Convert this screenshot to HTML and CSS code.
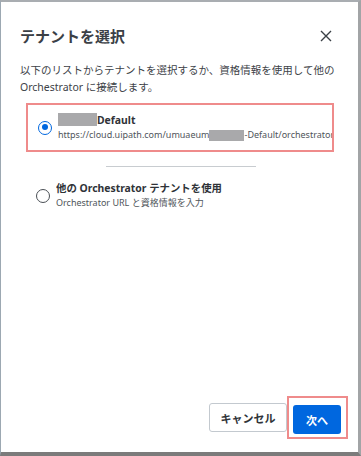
FILE: index.html
```html
<!DOCTYPE html>
<html lang="ja">
<head>
    <meta charset="UTF-8">
    <title>テナントを選択</title>
    <link rel="stylesheet" href="styles.css">
</head>
<body>
    <div class="dialog">
        <!-- Header -->
        <div class="dialog__header">
            <h1>テナントを選択</h1>
            <svg class="close" width="12" height="12" viewBox="0 0 12 12">
                <path d="M1 1 L11 11 M11 1 L1 11" stroke="#3a4046" stroke-width="1.4" fill="none"/>
            </svg>
        </div>

        <p class="intro">以下のリストからテナントを選択するか、資格情報を使用して他の Orchestrator に接続します。</p>

        <!-- Tenant options -->
        <div class="options">
            <div class="option option--marked">
                <span class="radio radio--on"></span>
                <div class="option__text">
                    <div class="option__title"><span class="redact redact--name"></span>Default</div>
                    <div class="option__sub">https://cloud.uipath.com/umuaeum<span class="redact redact--url"></span>-Default/orchestrator_</div>
                </div>
            </div>

            <div class="divider"></div>

            <div class="option">
                <span class="radio"></span>
                <div class="option__text">
                    <div class="option__title">他の Orchestrator テナントを使用</div>
                    <div class="option__sub">Orchestrator URL と資格情報を入力</div>
                </div>
            </div>
        </div>

        <!-- Footer -->
        <div class="dialog__footer">
            <button class="btn btn--cancel">キャンセル</button>
            <div class="mark">
                <button class="btn btn--primary">次へ</button>
            </div>
        </div>
    </div>
</body>
</html>
```

FILE: styles.css
```css
html, body {
    margin: 0;
    padding: 0;
    background-color: #ffffff;
}

body {
    font-family: "Noto Sans", "Noto Sans CJK JP", sans-serif;
    color: #3a3f44;
}

.dialog {
    box-sizing: border-box;
    width: 361px;
    height: 456px;
    display: flex;
    flex-direction: column;
    border-top: 2px solid #a9adb1;
    border-left: 1px solid #9ca8b2;
    border-right: 3px solid #a2a4a6;
    border-bottom: 4px solid #7b7b7b;
    background-color: #fff;
}

.dialog__header {
    display: flex;
    align-items: center;
    justify-content: space-between;
    padding: 24px 26px 0 19px;
}

h1 {
    margin: 0;
    font-size: 15px;
    line-height: 20px;
    font-weight: 700;
    color: #3b4046;
}

.close {
    display: block;
}

.intro {
    margin: 16px 20px 0 19px;
    font-size: 10.5px;
    line-height: 17px;
    color: #3d4247;
}

.options {
    margin: 7px 0 0 25px;
    width: 308px;
}

.option {
    display: flex;
    align-items: center;
    padding: 0 0 0 10px;
    height: 45px;
}

.option--marked {
    border: 2px solid #ef8b8b;
}

.radio {
    box-sizing: border-box;
    width: 14px;
    height: 14px;
    border-radius: 50%;
    border: 1.5px solid #4a4f55;
    flex-shrink: 0;
    margin-right: 6px;
    position: relative;
}

.radio--on {
    border-color: #0067df;
}

.radio--on::after {
    content: "";
    position: absolute;
    left: 2.5px;
    top: 2.5px;
    width: 6px;
    height: 6px;
    border-radius: 50%;
    background-color: #0067df;
}

.option__text {
    overflow: hidden;
    white-space: nowrap;
}

.option__title {
    font-size: 10.4px;
    line-height: 15px;
    font-weight: 700;
    color: #2f3338;
}

.option__sub {
    font-size: 9px;
    line-height: 14px;
    color: #4f555b;
}

.redact {
    display: inline-block;
    vertical-align: middle;
    background-color: #a9a9ab;
}

.redact--name {
    width: 43px;
    height: 15px;
    margin: -5px 0 0 -4px;
}

.redact--url {
    width: 35px;
    height: 11px;
}

.divider {
    width: 150px;
    height: 1px;
    background-color: #c8ccd0;
    margin: 14px 0 6px 80px;
}

.dialog__footer {
    margin-top: auto;
    display: flex;
    align-items: center;
    justify-content: flex-end;
    padding: 0 10px 13px 0;
}

.btn {
    font-family: "Noto Sans", "Noto Sans CJK JP", sans-serif;
    font-size: 11px;
    font-weight: 700;
    height: 29px;
    border-radius: 3px;
    cursor: pointer;
}

.btn--cancel {
    width: 78px;
    background-color: #fff;
    border: 1px solid #c3c9cf;
    color: #2f3338;
}

.mark {
    border: 2px solid #ef8b8b;
    padding: 7px 5px 3px 4px;
}

.btn--primary {
    display: block;
    width: 48px;
    background-color: #0067df;
    border: none;
    color: #fff;
}
```
